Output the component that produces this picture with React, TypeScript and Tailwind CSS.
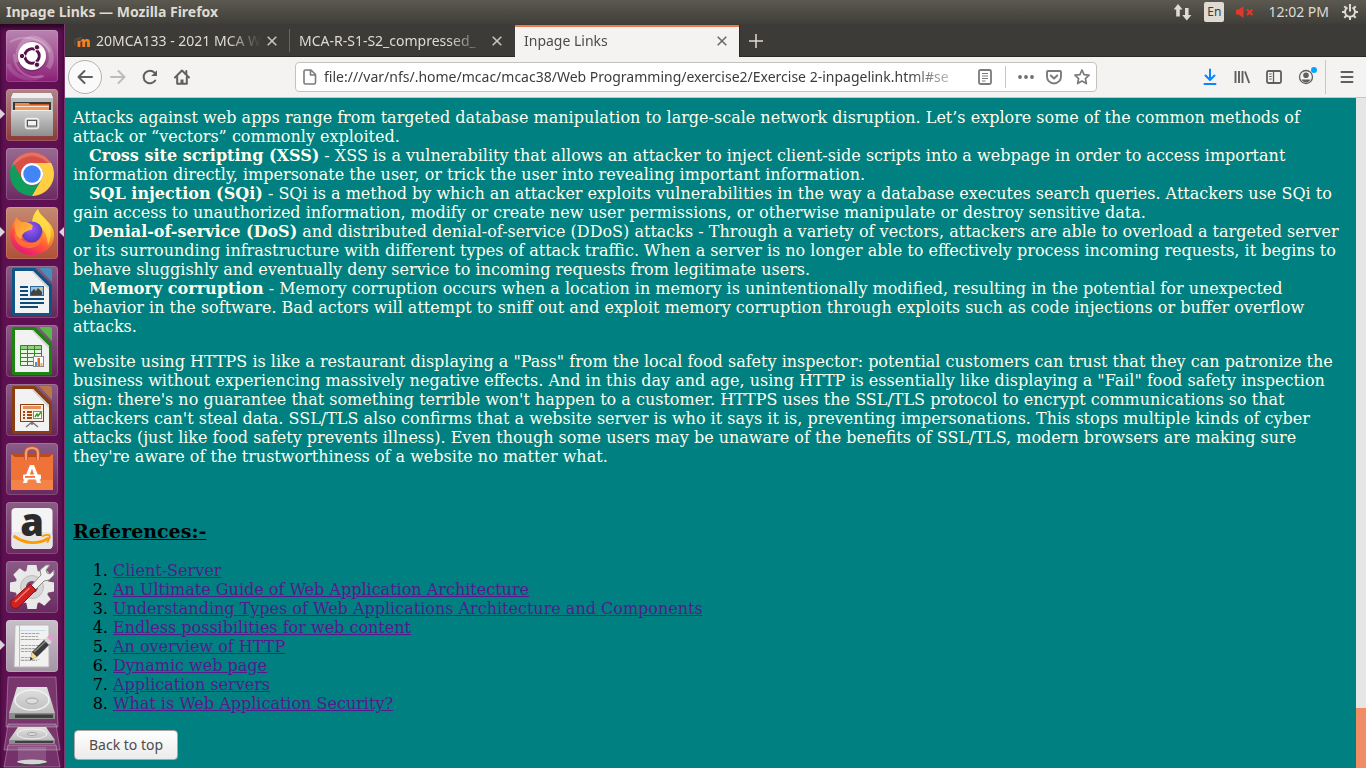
import React from "react";

const uiFont = "font-['Noto_Sans','Open_Sans',sans-serif]";

/* ---------- Top panel ---------- */

function TopPanel() {
  return (
    <header className="flex h-6 shrink-0 items-center bg-linear-to-b from-[#5b594f] to-[#3f3e39] pr-2 pl-1.5 text-[#dfdbd2]">
      <h1 className="flex-1 text-sm font-bold">Inpage Links — Mozilla Firefox</h1>
      <div className="flex items-center">
        <button aria-label="Network" className="mr-3">
          <svg width="18" height="18" viewBox="0 0 18 18" className="block" fill="#dfdbd2">
            <path d="M4 1 8.600 6.500H5.800v7H2.200v-7H-.4Z" />
            <path d="M12.800 17.500 8.200 12H11V5h3.600v7h2.800Z" />
          </svg>
        </button>
        <button aria-label="Keyboard layout" className="mr-3 h-5 w-5 rounded-xs bg-[#dfdbd2] text-xs leading-5 text-[#3c3b37]">En</button>
        <button aria-label="Sound muted" className="mr-3.5">
          <svg width="18" height="14" viewBox="0 0 18 14" className="block">
            <path d="M0 4.500h2.500L7.500 1v12L2.500 9.500H0Z" fill="#df382c" />
            <path d="m11 4.500 5.500 5.500m0-5.500L11 10" stroke="#df382c" strokeWidth="2" />
          </svg>
        </button>
        <time className="mr-[13px] text-sm">12:02 PM</time>
        <button aria-label="Session">
          <svg width="16" height="16" viewBox="0 0 16 16" className="block" fill="none" stroke="#dfdbd2">
            <path d="M5.500 3.500a5 5 0 1 0 5 0" strokeWidth="2" />
            <path d="M8 0v7.500" strokeWidth="2" />
            <path d="M0 8h3M13 8h3M8 13v3M2.300 2.300l2 2M13.700 2.300l-2 2M2.300 13.700l2-2M13.700 13.700l-2-2" strokeWidth="2" />
          </svg>
        </button>
      </div>
    </header>
  );
}

/* ---------- Launcher icons ---------- */

function UbuntuIcon() {
  return (
    <svg viewBox="0 0 52 52" className="block h-full w-full">
      <g fill="none" stroke="#fff" strokeOpacity=".22">
        <path d="M12 32C10 14 22 4 34 10c12 6 14 20 8 28" strokeWidth="5" />
        <path d="M4 12c14-8 34-4 40 10M8 24c0 18 14 26 30 22" strokeWidth="2" />
        <path d="M2 34c6 14 22 18 34 12" strokeWidth="4" strokeOpacity=".12" />
      </g>
      <circle cx="26" cy="27" r="14.500" fill="#000" fillOpacity=".2" />
      <circle cx="26" cy="26" r="14" fill="#fff" />
      <circle cx="26" cy="26" r="7.200" fill="none" stroke="#5a1048" strokeWidth="3" />
      <path d="m26 26-10 0M26 26l5-8.700M26 26l5 8.700" stroke="#fff" strokeWidth="1.200" />
      <circle cx="26" cy="26" r="5.500" fill="#fff" />
      <g fill="#5a1048" stroke="#fff" strokeWidth="1">
        <circle cx="16" cy="26" r="2.700" />
        <circle cx="31" cy="17.300" r="2.700" />
        <circle cx="31" cy="34.700" r="2.700" />
      </g>
    </svg>
  );
}

function FilesIcon() {
  return (
    <svg viewBox="0 0 52 52" className="block h-full w-full">
      <defs>
        <linearGradient id="cab" x1="0" y1="0" x2="0" y2="1">
          <stop offset="0" stopColor="#d2d2d2" />
          <stop offset="1" stopColor="#8f8f8f" />
        </linearGradient>
      </defs>
      <path d="M7 4h38l2 5v38H5V9Z" fill="#bcbcbc" />
      <path d="M7 4h38l2 5H5Z" fill="#efefef" />
      <path d="M7 13h38v9H7Z" fill="#3a3836" />
      <path d="M9 15h34v7H9Z" fill="#c9571f" />
      <path d="M9 14h14l1 2h19v1H9Z" fill="#e88a4c" />
      <path d="M9 17h34v1.500H9Z" fill="#f8e4d0" />
      <path d="M9 19h34v3H9Z" fill="#ef9a58" />
      <path d="M7 21h38l2 2v24H5V23Z" fill="url(#cab)" />
      <path d="M6 21.500h40" stroke="#eee" />
      <rect x="19.500" y="29.500" width="13" height="10" rx="2" fill="#b6b6b6" stroke="#eee" strokeWidth="1.500" />
      <rect x="21.500" y="31.500" width="9" height="5.500" fill="#f2f2f2" stroke="#555" />
    </svg>
  );
}

function ChromeIcon() {
  const blade = "M26 15h19.050A22 22 0 0 0 6.950 15l9.520 16.500A11 11 0 0 1 26 15Z";
  return (
    <svg viewBox="0 0 52 52" className="block h-full w-full">
      <path d={blade} fill="#d94f43" />
      <path d={blade} fill="#109c5a" transform="rotate(-120 26 26)" />
      <path d={blade} fill="#ffce43" transform="rotate(120 26 26)" />
      <path d="M5 20A22 22 0 0 1 47 20Q26-4 5 20Z" fill="#fff" fillOpacity=".2" />
      <circle cx="26" cy="26" r="11" fill="#fff" />
      <circle cx="26" cy="26" r="8.700" fill="#4285f4" />
    </svg>
  );
}

function FirefoxIcon() {
  return (
    <svg viewBox="0 0 52 52" className="block h-full w-full">
      <defs>
        <linearGradient id="fox" x1=".8" y1="0" x2=".3" y2="1">
          <stop offset="0" stopColor="#fff24a" />
          <stop offset=".35" stopColor="#ffb42b" />
          <stop offset=".65" stopColor="#ff5a36" />
          <stop offset="1" stopColor="#e6127d" />
        </linearGradient>
        <radialGradient id="globe" cx=".45" cy=".35" r=".7">
          <stop offset="0" stopColor="#9b59ff" />
          <stop offset="1" stopColor="#4a35b5" />
        </radialGradient>
        <linearGradient id="head" x1="0" y1="0" x2="1" y2="1">
          <stop offset="0" stopColor="#ff8a3a" />
          <stop offset="1" stopColor="#ffc53d" />
        </linearGradient>
      </defs>
      <path d="M32 2c1 5 6 8 9 12 5 4 7 9 7 14 0 12-10 20-22 20S4 39 4 27c0-6 3-11 6-15 0 2 1 4 2 5 5-3 10-2 14 0 0-6 2-11 6-15Z" fill="url(#fox)" />
      <path d="M32 2c1 5 6 8 9 12 5 6 5 16 1 24-1-12-4-18-16-21 0-6 2-11 6-15Z" fill="#ffe04a" fillOpacity=".75" />
      <circle cx="26" cy="25" r="10.500" fill="url(#globe)" />
      <path d="M8 27c1 9 8 15 17 14 8-1 13-8 11-16-1 6-5 11-11 11-7 0-12-4-13-10Z" fill="#ff7a32" fillOpacity=".8" />
      <path d="M10 10c2 3 5 5 8 6 4-1 7 0 9 3-2 3 1 3-3 4-3 1-6 2-7 4-1 1-2 3-1 5-4-1-6-4-7-8-1-5 0-9 1-14Z" fill="url(#head)" />
    </svg>
  );
}

type OfficeProps = { edge: string; light: string; children: React.ReactNode };

function OfficeIcon({ edge, light, children }: OfficeProps) {
  return (
    <svg viewBox="0 0 52 52" className="block h-full w-full">
      <path d="M8 2h21l17 17v29a2 2 0 0 1-2 2H8a2 2 0 0 1-2-2V4a2 2 0 0 1 2-2Z" fill={edge} />
      <path d="M33 2h11a2 2 0 0 1 2 2v12Z" fill={light} />
      <path d="M9 5h18l16 16v26H9Z" fill="#f2f2f2" />
      <path d="M27 5v0l16 16v3L25 5Z" fill="#d4d4d4" />
      {children}
    </svg>
  );
}

function WriterIcon() {
  return (
    <OfficeIcon edge="#0f5486" light="#4390bd">
      <path d="M14 21h8M14 25h8M14 29h8M14 33h24M14 37h24M14 41h18" stroke="#0b4a79" strokeWidth="1.800" />
      <rect x="24.500" y="20.500" width="13" height="9" fill="#8ec6e8" stroke="#2b6c9b" />
      <path d="M25 29v-3l3-3 2 2 2-3 4 4v3Z" fill="#44433f" />
      <circle cx="35" cy="22.500" r="1.300" fill="#f6c84c" />
    </OfficeIcon>
  );
}

function CalcIcon() {
  return (
    <OfficeIcon edge="#1d850f" light="#5bb84a">
      <rect x="14" y="20" width="22" height="21" fill="#e9f6e4" />
      <path d="M14 20h22v4H14Z" fill="#8fd07e" />
      <path d="M14.500 20.500h21v20h-21ZM14 24.500h22M14 28.500h22M14 32.500h22M14 36.500h22M21.500 20v21M28.500 20v21" fill="none" stroke="#2b8d1c" />
      <rect x="27.500" y="31.500" width="10" height="10" fill="#fff" stroke="#8a8a8a" />
      <path d="M29 37h2v4h-2Z" fill="#3e97d3" />
      <path d="M31.500 33h2.500v8h-2.500Z" fill="#e0622c" />
      <path d="M34.500 38h2v3h-2Z" fill="#f0b429" />
    </OfficeIcon>
  );
}

function ImpressIcon() {
  return (
    <OfficeIcon edge="#8a3d10" light="#b97646">
      <path d="m26 38-6 5M26 38l6 5M26 37v4" stroke="#777" strokeWidth="1.500" />
      <rect x="14.500" y="20.500" width="23" height="17" fill="#fdebdd" stroke="#8e3c12" />
      <path d="M17 22h18v3H17Z" fill="#e58e59" />
      <path d="M17 28h2M21 28h5M17 31h2M21 31h5M17 34h2M21 34h5" stroke="#a3481a" strokeWidth="2" />
      <rect x="27.500" y="27.500" width="8" height="7" fill="#fff" stroke="#888" />
      <path d="m29 33 2-3 1 2 3-4" fill="none" stroke="#34a01f" strokeWidth="1.500" />
    </OfficeIcon>
  );
}

function SoftwareIcon() {
  return (
    <svg viewBox="0 0 52 52" className="block h-full w-full">
      <path d="M5 10h42l-2 4H7Z" fill="#bd4a1c" />
      <path d="M5 11 9 14h34l4-3v36H5Z" fill="#ef7238" />
      <path d="M5 37h42v10H5Z" fill="#f58347" />
      <path d="M20 17V10q0-5 6-5t6 5v7" fill="none" stroke="#c9552a" strokeWidth="4" />
      <path d="M20 17V10q0-5 6-5t6 5v7" fill="none" stroke="#f3a079" strokeWidth="2.200" />
      <text x="26" y="40" textAnchor="middle" fontFamily="Lato" fontWeight="900" fontSize="25" fill="#fff">A</text>
      <rect x="17" y="31.500" width="18" height="5" rx="1" fill="#fff" />
      <rect x="19" y="33" width="10" height="1.800" fill="#ef7238" />
    </svg>
  );
}

function AmazonIcon() {
  return (
    <svg viewBox="0 0 52 52" className="block h-full w-full">
      <rect x="5.500" y="6" width="41" height="41" rx="4" fill="#f4f4f4" />
      <rect x="5.500" y="30" width="41" height="17" rx="4" fill="#e6e6e6" />
      <text x="26" y="34" textAnchor="middle" fontFamily="Open Sans" fontWeight="800" fontSize="38" fill="#2b2b2b">a</text>
      <path d="M8.500 34.500C19 42 32 42.500 42 36.500" fill="none" stroke="#f90" strokeWidth="2.800" strokeLinecap="round" />
      <path d="M36.500 34q6-2 7-.5t-2 6.500" fill="none" stroke="#f90" strokeWidth="1.800" strokeLinecap="round" />
    </svg>
  );
}

function SettingsIcon() {
  const teeth = [0, 45, 90, 135, 180, 225, 270, 315];
  return (
    <svg viewBox="0 0 52 52" className="block h-full w-full">
      <g fill="#e9e9e9">
        {teeth.map((a) => (
          <path key={a} d="M21.500 4h9l1.500 8H20Z" transform={`rotate(${a} 26 26)`} />
        ))}
        <circle cx="26" cy="26" r="17" />
      </g>
      <circle cx="26" cy="26" r="11.500" fill="#d6d6d6" stroke="#bdbdbd" />
      <circle cx="26" cy="26" r="6" fill="#7a3f70" />
      <path d="m22 28 13-14-1-5 6-5 4 0-4 5 1 3 3 1 4-4 0 5-5 5-5 1-13 13Z" fill="#efefef" stroke="#8c8c8c" />
      <path d="m24 23 6 6-17 17a4.500 4.500 0 0 1-7-7Z" fill="#cf2222" stroke="#8d1010" />
      <path d="M23.500 27 9 41" stroke="#f37a72" strokeWidth="1.500" />
    </svg>
  );
}

function EditorIcon() {
  return (
    <svg viewBox="0 0 52 52" className="block h-full w-full">
      <path d="M9 5h34v42H8Z" fill="#f1f1ef" stroke="#b9b4ba" />
      <path d="M13.500 5v41" stroke="#f0a5a5" />
      <path d="M14 10.500h26M14 19.500h26M14 29.500h26M14 39.500h20" stroke="#c9dcf0" />
      <path d="M15 13.500h19M15 16.500h17M15 19.500h18M15 25.500h18M15 28.500h15M15 31.500h16M15 37.500h12M15 40.500h16" stroke="#a5a5a5" strokeDasharray="3 .7" />
      <path d="m24 40 2-8 13-13 5 5-13 13Z" fill="#3c3c3c" />
      <path d="m24 40 2-8 5 5Z" fill="#f2dc8a" />
      <path d="m24 40 .8-3 2.200 2.200Z" fill="#222" />
      <path d="m28 32 13-12" stroke="#8f8f8f" strokeWidth="1.300" />
      <path d="m38 20 3-3 5 5-3 3Z" fill="#d8d8d8" />
      <path d="m41 17 2-1.500 4 1 .5 3L46 22Z" fill="#e59ad0" />
    </svg>
  );
}

function DriveStack() {
  return (
    <svg viewBox="0 0 60 92" className="block h-[92px] w-[60px]">
      <defs>
        <linearGradient id="disk" x1="0" y1="0" x2="0" y2="1">
          <stop offset="0" stopColor="#e2e2e2" />
          <stop offset="1" stopColor="#bdbdbd" />
        </linearGradient>
      </defs>
      <path d="M6 1h48l2 50H4Z" fill="#fff" fillOpacity=".16" stroke="#fff" strokeOpacity=".3" />
      <path d="M15 11h30l8 26H7Z" fill="url(#disk)" />
      <path d="M7 37h46v6H7Z" fill="#8b8b8b" />
      <path d="M13 38.500h38v3.500H13Z" fill="#3f3f3f" />
      <ellipse cx="30" cy="24" rx="17" ry="10" fill="none" stroke="#f2f2f2" strokeWidth="1.500" />
      <ellipse cx="30" cy="25" rx="6" ry="3" fill="#dcdcdc" stroke="#a5a5a5" />
      <path d="M6 48h48l4 26H2Z" fill="#fff" fillOpacity=".16" stroke="#fff" strokeOpacity=".3" />
      <path d="M16 51h28l9 13H7Z" fill="url(#disk)" />
      <path d="M7 64h46v4H7Z" fill="#8b8b8b" />
      <path d="M13 65h38v2H13Z" fill="#3f3f3f" />
      <ellipse cx="30" cy="58" rx="15" ry="5" fill="none" stroke="#f2f2f2" />
      <ellipse cx="30" cy="58" rx="5" ry="1.500" fill="#dcdcdc" stroke="#a5a5a5" />
      <path d="M6 69h48l4 22H2Z" fill="#fff" fillOpacity=".14" stroke="#fff" strokeOpacity=".3" />
      <path d="M16 71h28v15H16Z" fill="#fff" fillOpacity=".15" />
      <ellipse cx="30" cy="86" rx="15" ry="2.500" fill="#d5d5d5" />
      <path d="M15 87q15 5 30 0" fill="none" stroke="#4a4a4a" strokeWidth="1.500" />
    </svg>
  );
}

type LauncherItem = { name: string; tint: string; icon: React.ReactNode; running?: boolean; focused?: boolean };

const launcherItems: LauncherItem[] = [
  { name: "Search your computer", tint: "from-[#b884b0] to-[#8c1a78]", icon: <UbuntuIcon /> },
  { name: "Files", tint: "from-[#b08387] to-[#8b3a3a]", icon: <FilesIcon />, running: true },
  { name: "Google Chrome", tint: "from-[#9a6a93] to-[#6b2a62]", icon: <ChromeIcon /> },
  { name: "Firefox", tint: "from-[#c48a72] to-[#b04f37]", icon: <FirefoxIcon />, running: true, focused: true },
  { name: "LibreOffice Writer", tint: "from-[#8a5c86] to-[#652559]", icon: <WriterIcon /> },
  { name: "LibreOffice Calc", tint: "from-[#8a5c86] to-[#652559]", icon: <CalcIcon /> },
  { name: "LibreOffice Impress", tint: "from-[#8a5c86] to-[#652559]", icon: <ImpressIcon /> },
  { name: "Ubuntu Software", tint: "from-[#8a5c86] to-[#6a2a60]", icon: <SoftwareIcon /> },
  { name: "Amazon", tint: "from-[#8a5c86] to-[#6a2a60]", icon: <AmazonIcon /> },
  { name: "System Settings", tint: "from-[#8a5c86] to-[#6a2a60]", icon: <SettingsIcon /> },
  { name: "Text Editor", tint: "from-[#c9bfc9] to-[#a596a5]", icon: <EditorIcon />, running: true },
];

function Launcher() {
  return (
    <nav aria-label="Launcher" className="flex w-[65px] shrink-0 flex-col items-center gap-1 overflow-hidden border-r border-[#7b3a70] bg-[#5f1052] pt-1.5 shadow-[inset_0_4px_4px_#2a0624]">
      <ul className="flex w-full flex-col items-center gap-[7px]">
        {launcherItems.map((item) => (
          <li key={item.name} className="relative flex w-full justify-center">
            {item.running && (
              <svg width="5" height="10" viewBox="0 0 5 10" className="absolute top-5 left-0">
                <path d="M0 0 5 5 0 10Z" fill="#ddd3da" />
              </svg>
            )}
            <button aria-label={item.name} className={`h-[52px] w-[52px] rounded-sm bg-linear-to-b ${item.tint} shadow-[inset_0_0_0_1px_#ffffff28]`}>
              {item.icon}
            </button>
            {item.focused && (
              <svg width="5" height="10" viewBox="0 0 5 10" className="absolute top-5 right-0">
                <path d="M5 0 0 5 5 10Z" fill="#ddd3da" />
              </svg>
            )}
          </li>
        ))}
      </ul>
      <button aria-label="Mounted drives">
        <DriveStack />
      </button>
    </nav>
  );
}

/* ---------- Browser chrome ---------- */

function CloseIcon() {
  return (
    <svg width="10" height="10" viewBox="0 0 10 10" className="block" fill="none" stroke="currentColor" strokeWidth="1.600">
      <path d="m.7.700 8.600 8.600M9.300.700.700 9.300" />
    </svg>
  );
}

function MoodleIcon() {
  return (
    <svg width="16" height="16" viewBox="0 0 16 16" className="block shrink-0">
      <text x="2.500" y="13.500" fontFamily="Open Sans" fontWeight="800" fontSize="14" fill="#f58220">m</text>
      <path d="M0 5 5 3.500l4 1.500-2.500 3L3 7.500 0 8Z" fill="#3c3b37" />
      <path d="M0 6 6 3.800l3 1-4 2.400Z" fill="#594a3d" />
      <path d="M.8 6.500V12" stroke="#6b5b4a" strokeWidth=".8" />
    </svg>
  );
}

function Tab({ title, icon, active }: { title: string; icon?: React.ReactNode; active?: boolean }) {
  const look = active
    ? "border-r border-[#2a2926] bg-[#f4f3f1] pr-3 text-[#4c4c4c] shadow-[inset_0_2px_#f07746]"
    : "pr-[13px] text-[#dfdbd2]";
  return (
    <div role="tab" aria-selected={!!active} className={`flex w-[225px] items-center gap-1.5 pl-[9px] ${look}`}>
      {icon}
      <span className="flex-1 mask-r-from-80% text-sm whitespace-nowrap">{title}</span>
      <button aria-label={`Close ${title}`} className={active ? "text-[#6b6b6b]" : "text-[#c9c5bd]"}>
        <CloseIcon />
      </button>
    </div>
  );
}

function TabStrip() {
  return (
    <div role="tablist" className="flex h-[33px] shrink-0 border-b border-[#2a2926] bg-[#3c3b37] pt-px">
      <Tab title="20MCA133 - 2021 MCA W" icon={<MoodleIcon />} />
      <span className="my-1 -ml-px w-px bg-[#67665f]" />
      <Tab title="MCA-R-S1-S2_compressed_" />
      <div className="-mb-px flex">
        <Tab title="Inpage Links" active />
      </div>
      <button aria-label="New tab" className="ml-[9px] text-[#dfdbd2]">
        <svg width="14" height="14" viewBox="0 0 14 14" className="block" stroke="currentColor" strokeWidth="1.500">
          <path d="M7 0v14M0 7h14" />
        </svg>
      </button>
    </div>
  );
}

function ToolButton({ label, children, width = "w-8" }: { label: string; children: React.ReactNode; width?: string }) {
  return (
    <button aria-label={label} className={`flex h-8 shrink-0 items-center justify-center ${width}`}>
      {children}
    </button>
  );
}

function Icon({ children, color = "text-[#5f5f5f]" }: { children: React.ReactNode; color?: string }) {
  return (
    <svg width="16" height="16" viewBox="0 0 16 16" fill="none" stroke="currentColor" strokeWidth="2" strokeLinecap="round" strokeLinejoin="round" className={`block overflow-visible ${color}`}>
      {children}
    </svg>
  );
}

function Toolbar() {
  return (
    <div className="flex h-[41px] shrink-0 items-center border-b border-[#c9c7c4] bg-[#f4f3f1] px-[3px]">
      <button aria-label="Back" className="flex h-[34px] w-[34px] shrink-0 items-center justify-center rounded-full border border-[#b4b2af] bg-[#fbfafa]">
        <Icon>
          <path d="M15 8H1.500M7.500 2l-6 6 6 6" />
        </Icon>
      </button>
      <ToolButton label="Forward">
        <Icon color="text-[#bdbcba]">
          <path d="M1 8h13.500M8.500 2l6 6-6 6" />
        </Icon>
      </ToolButton>
      <ToolButton label="Reload">
        <Icon>
          <path d="M13.200 11.500A6.300 6.300 0 1 1 12.500 3.600" />
          <path d="M15 1.200V7H9.200Z" fill="currentColor" stroke="none" />
        </Icon>
      </ToolButton>
      <ToolButton label="Home">
        <Icon>
          <path d="M1 8.500 8 1.500l7 7" />
          <path d="M3.200 8v6.800h9.600V8" />
          <path d="M12.300 2v3" />
          <path d="M8 14.500v-4" strokeWidth="3" strokeLinecap="butt" />
        </Icon>
      </ToolButton>

      <div className="mx-[97px] flex h-[30px] min-w-0 flex-1 items-center rounded-sm border border-[#c4c2bf] bg-white pl-1.5">
        <svg width="16" height="16" viewBox="0 0 16 16" className="mr-1.5 block shrink-0" fill="none" stroke="#7b7b7b" strokeWidth="1.600" strokeLinejoin="round">
          <path d="M3.500 1h5.500l4.500 4.500v8a1.500 1.500 0 0 1-1.500 1.500H3.500A1.500 1.500 0 0 1 2 13.500v-11A1.500 1.500 0 0 1 3.500 1ZM8.500 1.500V6h4.500" />
        </svg>
        <input
          aria-label="Address"
          type="text"
          defaultValue="file:///var/nfs/.home/mcac/mcac38/Web Programming/exercise2/Exercise 2-inpagelink.html#se"
          className="min-w-0 flex-1 mask-r-from-90% text-sm text-[#3c3c3c] outline-none"
        />
        <ToolButton label="Reader view" width="w-7">
          <Icon color="text-[#7b7b7b]">
            <rect x="2" y="1" width="12" height="14" rx="1.500" strokeWidth="1.800" />
            <path d="M5 4.500h6M5 7h6M5 9.500h6M5 12h3.500" strokeWidth="1" strokeLinecap="butt" />
          </Icon>
        </ToolButton>
        <span className="mx-1.5 h-[22px] w-px bg-[#c9c7c4]" />
        <ToolButton label="Page actions" width="w-7">
          <svg width="16" height="4" viewBox="0 0 16 4" className="block" fill="#6f6f6f">
            <circle cx="2" cy="2" r="1.900" />
            <circle cx="8" cy="2" r="1.900" />
            <circle cx="14" cy="2" r="1.900" />
          </svg>
        </ToolButton>
        <ToolButton label="Save to Pocket" width="w-7">
          <Icon color="text-[#7b7b7b]">
            <path d="M2 2h12q1 0 1 1v4.500a7 7 0 0 1-14 0V3q0-1 1-1Z" strokeWidth="1.900" />
            <path d="m4.800 6.500 3.200 3 3.200-3" />
          </Icon>
        </ToolButton>
        <ToolButton label="Bookmark this page" width="w-7">
          <Icon color="text-[#7b7b7b]">
            <path d="m8 1 2.100 4.600 5 .6-3.700 3.400 1 5L8 12.100l-4.400 2.500 1-5L.900 6.200l5-.6Z" strokeWidth="1.700" />
          </Icon>
        </ToolButton>
      </div>

      <ToolButton label="Downloads">
        <Icon color="text-[#0a84ff]">
          <path d="M8 .500v10M3.500 6.500 8 11l4.500-4.500M2.500 15h11" />
        </Icon>
      </ToolButton>
      <ToolButton label="Library">
        <Icon>
          <path d="M1.500 2v12M5 2v12M8.500 2v12M11 2.500 15.200 14" strokeWidth="1.900" strokeLinecap="butt" />
        </Icon>
      </ToolButton>
      <ToolButton label="Sidebars">
        <Icon>
          <rect x="1" y="2" width="14" height="12" rx="1.500" strokeWidth="1.800" />
          <path d="M7.500 2v12" strokeWidth="1.300" />
          <path d="M3.200 5h2.500M3.200 7.500h2.500M3.200 10h2.500" strokeWidth="1" strokeLinecap="butt" />
        </Icon>
      </ToolButton>
      <ToolButton label="Account">
        <Icon>
          <circle cx="8" cy="8" r="6.500" strokeWidth="1.300" />
          <circle cx="8" cy="6.200" r="2.800" fill="currentColor" stroke="none" />
          <path d="M3.500 10.500h9Q11 13.500 8 13.500t-4.500-3Z" fill="currentColor" stroke="none" />
          <circle cx="16" cy="1" r="3" fill="#00a7ff" stroke="none" />
        </Icon>
      </ToolButton>
      <span className="mr-[5px] ml-[3px] h-[34px] w-px bg-[#c9c7c4]" />
      <ToolButton label="Open menu">
        <Icon>
          <path d="M2.500 3h11M2.500 8h11M2.500 13h11" />
        </Icon>
      </ToolButton>
    </div>
  );
}

/* ---------- Document ---------- */

const references = [
  "Client-Server",
  "An Ultimate Guide of Web Application Architecture",
  "Understanding Types of Web Applications Architecture and Components",
  "Endless possibilities for web content",
  "An overview of HTTP",
  "Dynamic web page",
  "Application servers",
  "What is Web Application Security?",
];

function Document() {
  return (
    <main className="min-w-0 flex-1 bg-[#008080] px-2 pt-2.5 font-['DejaVu_Serif',serif] text-base leading-[19px] text-[#fffff0]">
      <section>
        <p>
          Attacks against web apps range from targeted database manipulation to large-scale network disruption. Let’s explore some of the common methods of attack or “vectors” commonly exploited.
        </p>
        <p className="indent-4">
          <b>Cross site scripting (XSS)</b> - XSS is a vulnerability that allows an attacker to inject client-side scripts into a webpage in order to access important information directly, impersonate the user, or trick the user into revealing important information.
        </p>
        <p className="indent-4">
          <b>SQL injection (SQi)</b> - SQi is a method by which an attacker exploits vulnerabilities in the way a database executes search queries. Attackers use SQi to gain access to unauthorized information, modify or create new user permissions, or otherwise manipulate or destroy sensitive data.
        </p>
        <p className="indent-4">
          <b>Denial-of-service (DoS)</b> and distributed denial-of-service (DDoS) attacks - Through a variety of vectors, attackers are able to overload a targeted server or its surrounding infrastructure with different types of attack traffic. When a server is no longer able to effectively process incoming requests, it begins to behave sluggishly and eventually deny service to incoming requests from legitimate users.
        </p>
        <p className="indent-4">
          <b>Memory corruption</b> - Memory corruption occurs when a location in memory is unintentionally modified, resulting in the potential for unexpected behavior in the software. Bad actors will attempt to sniff out and exploit memory corruption through exploits such as code injections or buffer overflow attacks.
        </p>
      </section>
      <p className="mt-4">
        website using HTTPS is like a restaurant displaying a "Pass" from the local food safety inspector: potential customers can trust that they can patronize the business without experiencing massively negative effects. And in this day and age, using HTTP is essentially like displaying a "Fail" food safety inspection sign: there's no guarantee that something terrible won't happen to a customer. HTTPS uses the SSL/TLS protocol to encrypt communications so that attackers can't steal data. SSL/TLS also confirms that a website server is who it says it is, preventing impersonations. This stops multiple kinds of cyber attacks (just like food safety prevents illness). Even though some users may be unaware of the benefits of SSL/TLS, modern browsers are making sure they're aware of the trustworthiness of a website no matter what.
      </p>
      <h3 className="mt-[54px] text-[19px] leading-[22px] font-bold text-black underline">References:-</h3>
      <ol className="mt-[19px] list-decimal pl-10 text-black">
        {references.map((title) => (
          <li key={title}>
            <a href="#references" className="text-[#551a8b] underline">{title}</a>
          </li>
        ))}
      </ol>
      <button className={`mt-[17px] ml-px h-[30px] rounded-sm border border-[#a9a7a4] bg-linear-to-b from-white to-[#ebebeb] px-3.5 text-sm text-[#4c4c4c] ${uiFont}`}>
        Back to top
      </button>
    </main>
  );
}

export default function App() {
  return (
    <div className={`flex h-screen flex-col overflow-hidden ${uiFont}`}>
      <TopPanel />
      <div className="flex min-h-0 flex-1">
        <Launcher />
        <div className="flex min-w-0 flex-1 flex-col">
          <TabStrip />
          <Toolbar />
          <div className="flex min-h-0 flex-1 overflow-hidden">
            <Document />
            <div aria-hidden="true" className="flex w-2.5 shrink-0 flex-col justify-end bg-[#e6e6e6]">
              <div className="h-[9%] bg-[#f08d66]" />
            </div>
          </div>
        </div>
      </div>
    </div>
  );
}
